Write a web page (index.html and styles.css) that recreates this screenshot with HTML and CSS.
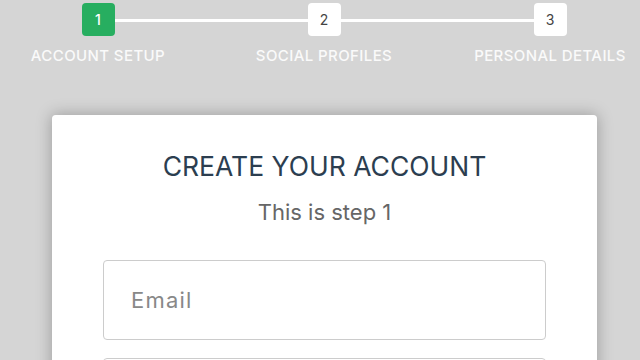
FILE: index.html
```html
<!DOCTYPE html>
<html lang="en">
<head>
    <meta charset="UTF-8">
    <meta name="viewport" content="width=device-width, initial-scale=1.0">
    <title>Multi Step Form</title>
    <link rel="stylesheet" href="styles.css">
</head>
<body>
    <form class="msform">
        <ul class="progressbar">
            <li class="step active">
                <span class="step-num">1</span>
                <span class="step-label">Account Setup</span>
            </li>
            <li class="step">
                <span class="step-num">2</span>
                <span class="step-label">Social Profiles</span>
            </li>
            <li class="step">
                <span class="step-num">3</span>
                <span class="step-label">Personal Details</span>
            </li>
        </ul>
        <fieldset class="card">
            <h2 class="fs-title">Create your account</h2>
            <h3 class="fs-subtitle">This is step 1</h3>
            <input type="text" name="email" placeholder="Email">
            <input type="password" name="pass" placeholder="Password">
        </fieldset>
    </form>
</body>
</html>
```

FILE: styles.css
```css
html, body {
    margin: 0;
    height: 100%;
    overflow: hidden;
}
body {
    font-family: Inter, "Open Sans", sans-serif;
    background-color: #d5d5d5;
}
.msform {
    margin: 0;
}
.progressbar {
    list-style: none;
    margin: 3px 0 0 -15px;
    padding: 0;
    display: flex;
}
.step {
    flex-shrink: 0;
    width: 226px;
    display: flex;
    flex-direction: column;
    align-items: center;
    position: relative;
}
.step + .step::before {
    content: "";
    position: absolute;
    left: -113px;
    right: 113px;
    top: 16px;
    height: 3px;
    background: #fff;
    z-index: 0;
}
.step-num {
    position: relative;
    z-index: 1;
    width: 33px;
    height: 33px;
    line-height: 33px;
    text-align: center;
    background: #fff;
    border-radius: 4px;
    font-size: 14px;
    color: #444;
}
.step.active .step-num {
    background: #27ae60;
    color: #fff;
    font-weight: 500;
}
.step-label {
    margin-top: 11px;
    font-size: 15px;
    font-weight: 500;
    line-height: 18px;
    letter-spacing: 0.4px;
    text-transform: uppercase;
    color: #fafafa;
    white-space: nowrap;
}
.card {
    margin: 50px 0 0 52px;
    width: 545px;
    box-sizing: border-box;
    background: #fff;
    border: 0;
    border-radius: 4px;
    box-shadow: 0 0 15px 1px rgba(0, 0, 0, 0.25);
    padding: 36px 51px 0 51px;
    min-height: 300px;
}
.fs-title {
    margin: 0;
    font-size: 26.5px;
    font-weight: 400;
    line-height: 30px;
    text-align: center;
    text-transform: uppercase;
    color: #2c3e50;
}
.fs-subtitle {
    margin: 18px 0 35px;
    font-size: 22px;
    font-weight: 400;
    line-height: 26px;
    text-align: center;
    color: #666;
}
.card input {
    display: block;
    width: 100%;
    box-sizing: border-box;
    height: 80px;
    margin-bottom: 18px;
    padding: 0 27px;
    border: 1px solid #ccc;
    border-radius: 4px;
    font-family: inherit;
    font-size: 22px;
    letter-spacing: 1.2px;
    color: #2c3e50;
}
.card input::placeholder {
    color: #888;
}
```
